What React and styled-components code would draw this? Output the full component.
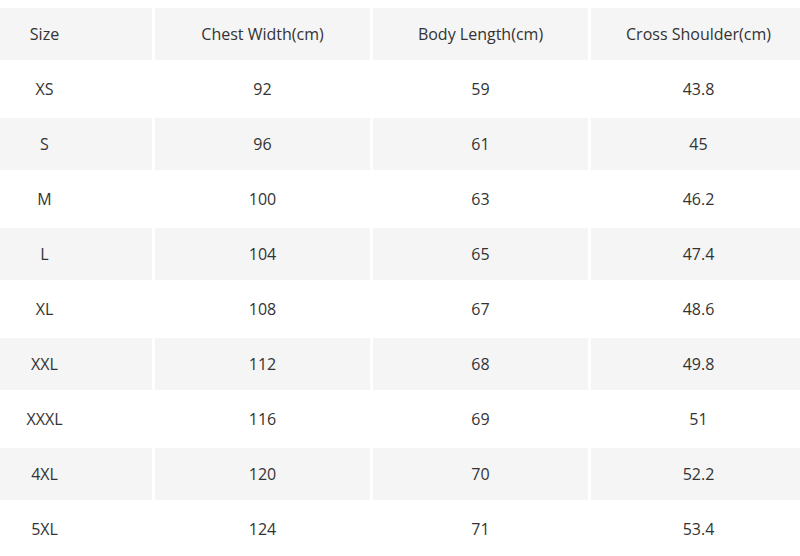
import styled, { createGlobalStyle } from 'styled-components';

const GlobalStyle = createGlobalStyle`
  html, body {
    margin: 0;
    padding: 0;
    background: #fff;
    overflow: hidden;
  }
`;

const headers = ['Size', 'Chest Width(cm)', 'Body Length(cm)', 'Cross Shoulder(cm)'];

const rows = [
  ['XS', '92', '59', '43.8'],
  ['S', '96', '61', '45'],
  ['M', '100', '63', '46.2'],
  ['L', '104', '65', '47.4'],
  ['XL', '108', '67', '48.6'],
  ['XXL', '112', '68', '49.8'],
  ['XXXL', '116', '69', '51'],
  ['4XL', '120', '70', '52.2'],
  ['5XL', '124', '71', '53.4'],
];

export default function App() {
  return (
    <>
      <GlobalStyle />
      <Page>
        <Table>
          {headers.map((h) => (
            <Cell key={h} $shaded>
              {h}
            </Cell>
          ))}
          {rows.map((row, i) =>
            row.map((v, j) => (
              <Cell key={`${i}-${j}`} $shaded={i % 2 === 1}>
                {v}
              </Cell>
            ))
          )}
        </Table>
      </Page>
    </>
  );
}

const Page = styled.div`
  width: 800px;
  height: 556px;
  overflow: hidden;
  padding-top: 8px;
  box-sizing: border-box;
`;

const Table = styled.div`
  display: grid;
  grid-template-columns: repeat(4, 215px);
  grid-auto-rows: 52px;
  gap: 3px;
  margin-left: -63px;
  font-family: 'Open Sans', 'Liberation Sans', sans-serif;
  font-size: 16px;
  color: #333;
`;

const Cell = styled.div`
  display: flex;
  align-items: center;
  justify-content: center;
  background: ${(p) => (p.$shaded ? '#f5f5f5' : '#fff')};
`;
